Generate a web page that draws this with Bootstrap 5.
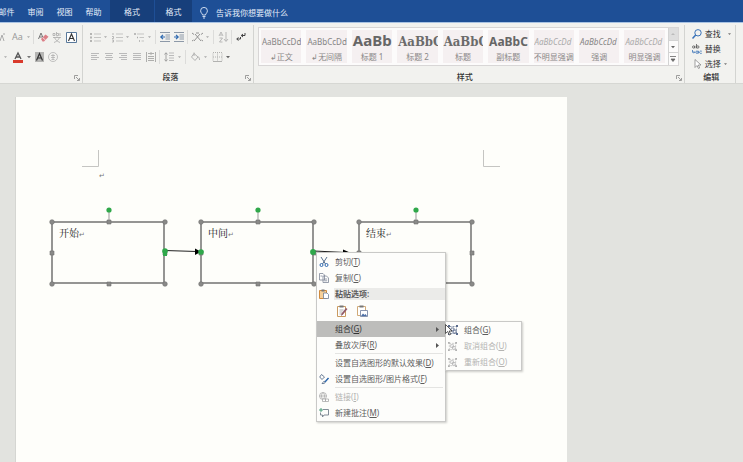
<!DOCTYPE html>
<html lang="zh-CN">
<head>
<meta charset="utf-8">
<meta name="viewport" content="width=device-width, initial-scale=1">
<title>流程图 - Word</title>
<link href="https://cdn.jsdelivr.net/npm/bootstrap@5.3.0/dist/css/bootstrap.min.css" rel="stylesheet">
<style>
:root{--ui:"Noto Sans","Noto Sans CJK SC",sans-serif}
body{font-family:var(--ui);font-size:8px;line-height:12px;background:#e2e3df;color:#444}
button{font:inherit;color:inherit;background:none;border:0;padding:0}
svg{display:block;flex:none;overflow:visible}
.tabs{background:#1e4f96;height:23px;border-bottom:1px solid #a9c3e3;color:#e6eefa}
.tabs .nav{margin-left:-8px;flex-wrap:nowrap}
.tabs a{color:#e6eefa;width:29px;padding:6px 0 4px;text-align:center;text-decoration:none;white-space:nowrap}
.tabs a.ctx{background:#173f7b;width:44px;margin-left:2px}
.tabs a.ctx + a.ctx{width:37px;margin-left:1px}
.ribbon{background:#f2f2ef;height:61px;border-bottom:1px solid #d6d7d3}
.grp{position:relative;border-right:1px solid #d3d4d1;margin:2px 0 0;padding-top:2px}
.grp-font{width:83px}
.grp-para{width:171px;padding-left:5px}
.grp-edit{width:51px;padding-left:7px}
.grp-name{margin-top:auto;color:#333;text-align:center;font-weight:500}
.launch{position:absolute;right:2px;bottom:2px}
.tools{height:20px}
.tool{width:14px;height:16px;display:flex;align-items:center;justify-content:center}
.tool.split{width:22px;justify-content:flex-start;padding-left:2px;gap:3px}
.tool.cut{width:10px;justify-content:flex-start;padding-left:4px}
.rule{width:1px;height:14px;background:#dcdcda;margin:0 2px 0 1px}
.gallery{border:1px solid #d8d6d6;background:#fcfbfb;margin:0 5px 0 4px;height:39px}
.styles{gap:5px;padding:2px 3px 2px 2px}
.sty{flex:1 1 0;min-width:0;background:#f5f0f1;overflow:hidden;color:#898787;height:33px}
.sty .pv{height:20px;line-height:22px;font-family:"Noto Sans","Open Sans",sans-serif;font-size:8px;white-space:nowrap;overflow:hidden;text-align:left;padding-left:1px;color:#858585}
.sty .pv.h1s{font-size:15px;font-weight:700;color:#666;line-height:18px}
.sty .pv.ser{font-family:"DejaVu Serif Condensed","DejaVu Serif",serif;font-size:13px;font-weight:700;color:#6b6b6b}
.sty .pv.sub{font-size:12px;font-weight:700;color:#666}
.sty .pv.em{font-style:italic}
.sty .pv.pale{color:#aaa}
.scroller{width:10px;border-left:1px solid #d3d3d3}
.scroller button{flex:1;display:flex;align-items:center;justify-content:center;border-bottom:1px solid #d3d3d3}
.scroller button:first-child{background:#dedede}
.scroller button:last-child{border-bottom:0}
.cmd{display:flex;align-items:center;gap:3px;height:15px;white-space:nowrap;color:#333}
.cmd svg:first-child{width:10px}
.desk{padding:13px 176px 0 15px}
.sheet{background:#fefefa;border-left:1px solid #d5d6d2;position:relative;min-width:520px}
.art{position:absolute;left:0;top:0}
.node{position:absolute;width:114px;height:63px;padding:4px 6px;font-family:"Liberation Serif","Noto Serif CJK SC","Noto Sans CJK SC",serif;font-size:10px;line-height:14px;color:#222;border:2px solid #959593}
.n1{left:35px;top:124px}.n2{left:184px;top:124px}.n3{left:342px;top:124px}
.node span,.pm{color:#777;font-size:7px}
.pm{position:absolute;left:83px;top:73px}
.ctxmenu{position:absolute;background:#fdfdfb;border:1px solid #c9c9c7;box-shadow:1px 1px 2px #0003;color:#5c5c5c;white-space:nowrap}
.main-menu{left:300px;top:155px;width:130px;padding-top:1px}
.sub-menu{left:429px;top:224px;width:77px}
.mi{display:flex;align-items:center;width:100%;height:16px;text-align:left}
.mi .ic{width:18px;padding-left:2px;flex:none}
.mi .arrow{margin-left:auto;margin-right:6px}
.mi.hot{background:#bdbdbb;color:#333}
.mi:disabled{color:#b4b4b2}
.cap{display:flex;height:15px;align-items:center;font-weight:600}
.cap .ic{width:17px;padding-left:2px;flex:none}
.cap .tx{background:#ebebe9;flex:1;padding-left:1px}
.pastes{height:20px;padding-left:20px;gap:9px}
.line{height:1px;margin:0 2px 1px 18px;background:#e4e4e2}
.pointer{position:absolute;left:429px;top:227px}
</style>
<script src="https://cdn.jsdelivr.net/npm/bootstrap@5.3.0/dist/js/bootstrap.bundle.min.js"></script>
</head>
<body class="d-flex flex-column min-vh-100 overflow-hidden">
<svg width="0" height="0" class="position-absolute" aria-hidden="true">
<defs>
<symbol id="dn" viewBox="0 0 4 4"><path d="M0 1h4L2 3.300z" fill="currentColor"/></symbol>
<symbol id="lc" viewBox="0 0 6 6"><path d="M.5 4V.5H4M2 2l3 3M5.500 3v2.500H3" fill="none" stroke="#888" stroke-width=".8"/></symbol>
<symbol id="grpi" viewBox="0 0 10 10"><path d="M1.500 1.500h7v7h-7z" fill="none" stroke="currentColor" stroke-width=".7" stroke-dasharray="2 1"/><path d="M0 0h2v2H0zM8 0h2v2H8zM0 8h2v2H0zM8 8h2v2H8z" fill="currentColor"/><path d="M3 3h3v3H3zM5 5h3v3H5z" fill="#fff" stroke="currentColor" stroke-width=".8"/></symbol>
</defs>
</svg>
<header>
<div class="tabs d-flex">
<nav class="nav" aria-label="功能区选项卡"><a href="#">邮件</a><a href="#">审阅</a><a href="#">视图</a><a href="#">帮助</a><a href="#" class="ctx">格式</a><a href="#" class="ctx">格式</a></nav>
<button class="d-flex align-items-center gap-2 ps-2 pt-1" type="button"><svg width="8" height="12" viewBox="0 0 8 12" fill="none" stroke="#dfe9f7" stroke-width=".9"><path d="M2.500 8C2.500 6.500.6 6 .6 3.800a3.400 3.400 0 0 1 6.800 0C7.400 6 5.500 6.500 5.500 8zM2.500 9.500h3M3 11h2"/></svg><span>告诉我你想要做什么</span></button>
</div>
<div class="ribbon d-flex">
<section class="grp grp-font d-flex flex-column flex-shrink-0" aria-label="字体">
<div class="tools d-flex align-items-center">
<button class="tool cut" aria-label="缩小字体"><svg width="2" height="8" viewBox="0 0 2 8"><path d="M-4 8l2-6 2 6M-1 1h2" fill="none" stroke="#aaa"/></svg></button>
<button class="tool split" aria-label="更改大小写"><svg width="12" height="10" viewBox="0 0 12 10"><text x="0" y="8" font-size="9" fill="#999">Aa</text></svg><svg width="3" height="4" color="#aaa"><use href="#dn"/></svg></button>
<i class="rule"></i>
<button class="tool" aria-label="清除格式"><svg width="11" height="11" viewBox="0 0 11 11"><path d="M.5 7l2.500-6 2.500 6M1.500 5h3" fill="none" stroke="#777"/><path d="M3 7l4.500-4.500 3 2.200L6 9.500H4.500z" fill="#db7f87"/><path d="M4.500 5.500l3 2.500" stroke="#fff" stroke-width=".7"/></svg></button>
<button class="tool" aria-label="拼音指南"><svg width="10" height="11" viewBox="0 0 10 11" fill="none" stroke="#aaa" stroke-width=".8"><path d="M1 1.500h2v2H1zM4.500 0v3.500h2v-2h-2M8 1v3M1 5.500h8M5 4.500v1M2.500 5.500c1 2.500 3 4 5.500 5M7.500 5.500c-1 2.500-3 4-5.500 5"/></svg></button>
<button class="tool" aria-label="字符边框"><svg width="11" height="11" viewBox="0 0 11 11"><path d="M.5.5h10v10H.5z" fill="#fff" stroke="#59799b"/><path d="M2.500 9l3-7 3 7M3.500 6.500h4" stroke="#333" fill="none" stroke-width="1.100"/></svg></button>
</div>
<div class="tools d-flex align-items-center">
<button class="tool cut" aria-label="突出显示颜色"><svg width="3" height="4" color="#aaa"><use href="#dn"/></svg></button>
<button class="tool split" aria-label="字体颜色"><svg width="12" height="11" viewBox="0 0 12 11"><path d="M3 7l3-6 3 6M4 5h4" stroke="#555" fill="none" stroke-width="1.300"/><path d="M1 8h10v3H1z" fill="#d93a2c"/></svg><svg width="4" height="4" color="#777"><use href="#dn"/></svg></button>
<button class="tool" aria-label="字符底纹"><svg width="9" height="10" viewBox="0 0 9 10"><path d="M0 0h9v10H0z" fill="#b5b5b3"/><path d="M1.500 8.500l3-7 3 7M2.500 6h4" stroke="#333" fill="none" stroke-width="1.200"/></svg></button>
<button class="tool" aria-label="带圈字符"><svg width="10" height="10" viewBox="0 0 10 10" fill="none" stroke="#aaa" stroke-width=".7"><circle cx="5" cy="5" r="4.500"/><path d="M3 3.500h4M5 2v5.500M3 5.500h4M3.500 7.500h3"/></svg></button>
</div>
<svg class="launch" width="6" height="6"><use href="#lc"/></svg>
</section>
<section class="grp grp-para d-flex flex-column flex-shrink-0" aria-label="段落">
<div class="tools d-flex align-items-center">
<button class="tool split" aria-label="项目符号"><svg width="11" height="9" viewBox="0 0 11 9"><path d="M0 0h2v2H0zM0 3.500h2v2H0zM0 7h2v2H0z" fill="#b5b5b3"/><path d="M4 1h7M4 4.500h7M4 8h7" stroke="#c5c5c3"/></svg><svg width="3" height="4" color="#aaa"><use href="#dn"/></svg></button>
<button class="tool split" aria-label="编号"><svg width="11" height="9" viewBox="0 0 11 9"><path d="M1 0v2M0 3.500h1.500v2H0M0 7h1.500v2H0" stroke="#aaa" fill="none" stroke-width=".8"/><path d="M4 1h7M4 4.500h7M4 8h7" stroke="#c5c5c3"/></svg><svg width="3" height="4" color="#aaa"><use href="#dn"/></svg></button>
<button class="tool split" aria-label="多级列表"><svg width="11" height="9" viewBox="0 0 11 9"><path d="M0 1h2M3 4.500h1M5 8h1" stroke="#aaa" stroke-width="1.500"/><path d="M3 1h7M5.500 4.500H10M7.500 8H10" stroke="#c5c5c3"/></svg><svg width="3" height="4" color="#aaa"><use href="#dn"/></svg></button>
<i class="rule"></i>
<button class="tool" aria-label="减少缩进"><svg width="10" height="10" viewBox="0 0 10 10"><path d="M0 .5h10M5.500 3H10M5.500 5H10M5.500 7H10M0 9.500h10" stroke="#8d99a8"/><path d="M5 5H1M3 2.800L.8 5 3 7.200" stroke="#2e69b0" fill="none" stroke-width="1.200"/></svg></button>
<button class="tool" aria-label="增加缩进"><svg width="10" height="10" viewBox="0 0 10 10"><path d="M0 .5h10M5.500 3H10M5.500 5H10M5.500 7H10M0 9.500h10" stroke="#8d99a8"/><path d="M0 5h4M2 2.800L4.200 5 2 7.200" stroke="#2e69b0" fill="none" stroke-width="1.200"/></svg></button>
<i class="rule"></i>
<button class="tool split" aria-label="中文版式"><svg width="11" height="10" viewBox="0 0 11 10" fill="none" stroke="#888" stroke-width=".9"><path d="M0 1l2 1.500M11 1L9 2.500M2 9l6-7M3 2l6 7M0 9l1.500-1M11 9L9.500 8M4 1h3"/></svg><svg width="3" height="4" color="#aaa"><use href="#dn"/></svg></button>
<i class="rule"></i>
<button class="tool" aria-label="排序"><svg width="9" height="10" viewBox="0 0 9 10" fill="none" stroke="#aaa" stroke-width=".8"><path d="M0 4l2-4 2 4M1 3h2M.5 6h3l-3 4h3M7 0v9M5 7l2 2.500L9 7"/></svg></button>
<i class="rule"></i>
<button class="tool" aria-label="显示编辑标记"><svg width="10" height="8" viewBox="0 0 10 8" fill="none" stroke="#444"><path d="M9 0v2.500H5.500M7 1L5.200 2.500 7 4M4.500 4v2H1M2.500 4.500L.7 6l1.800 1.500"/></svg></button>
</div>
<div class="tools d-flex align-items-center">
<button class="tool" aria-label="左对齐"><svg width="8" height="8" viewBox="0 0 8 8"><path d="M0 .5h8M0 2.500h6M0 4.500h8M0 6.500h6" stroke="#bababa"/></svg></button>
<button class="tool" aria-label="居中"><svg width="8" height="8" viewBox="0 0 8 8"><path d="M0 .5h8M1 2.500h6M0 4.500h8M1 6.500h6" stroke="#bababa"/></svg></button>
<button class="tool" aria-label="右对齐"><svg width="8" height="8" viewBox="0 0 8 8"><path d="M0 .5h8M2 2.500h6M0 4.500h8M2 6.500h6" stroke="#bababa"/></svg></button>
<button class="tool" aria-label="两端对齐"><svg width="8" height="8" viewBox="0 0 8 8"><path d="M0 .5h8M0 2.500h8M0 4.500h8M0 6.500h8" stroke="#bababa"/></svg></button>
<button class="tool" aria-label="分散对齐"><svg width="10" height="10" viewBox="0 0 10 10"><path d="M.5 0v10M9.500 0v10M2 1.500h6M5 0v3M2 4.500h6M2 6.500h6M2 8.500h6" stroke="#aeaeac"/></svg></button>
<i class="rule"></i>
<button class="tool split" aria-label="行距"><svg width="11" height="10" viewBox="0 0 11 10"><path d="M2 1v8M.5 2.500L2 .7l1.500 1.800M.5 7.500L2 9.300l1.500-1.800" stroke="#999" fill="none" stroke-width=".9"/><path d="M5 1h5M5 3.500h5M5 6h5M5 8.500h5" stroke="#bababa"/></svg><svg width="3" height="4" color="#aaa"><use href="#dn"/></svg></button>
<i class="rule"></i>
<button class="tool split" aria-label="底纹"><svg width="11" height="10" viewBox="0 0 11 10" fill="none" stroke="#aaa" stroke-width=".9"><path d="M4 1.500l4 3.500-3 3.500L1.500 5zM4 4V.5M8 4.500c1 .5 1.500 2 1.500 3.500"/></svg><svg width="3" height="4" color="#aaa"><use href="#dn"/></svg></button>
<button class="tool split" aria-label="边框"><svg width="11" height="10" viewBox="0 0 11 10" fill="none" stroke="#b2b2b0"><path d="M1 .5h9v9H1zM5.500.5v9M1 5h9" stroke-dasharray="1 1"/><path d="M1 9.500h9"/></svg><svg width="4" height="4" color="#666"><use href="#dn"/></svg></button>
</div>
<div class="grp-name">段落</div><svg class="launch" width="6" height="6"><use href="#lc"/></svg>
</section>
<section class="grp d-flex flex-column flex-fill" aria-label="样式">
<div class="gallery d-flex">
<div class="styles d-flex flex-fill">
<button class="sty"><div class="pv">AaBbCcDd</div><div>↲正文</div></button>
<button class="sty"><div class="pv">AaBbCcDd</div><div>↲无间隔</div></button>
<button class="sty"><div class="pv h1s">AaBb</div><div>标题 1</div></button>
<button class="sty"><div class="pv ser">AaBbC</div><div>标题 2</div></button>
<button class="sty"><div class="pv ser">AaBbC</div><div>标题</div></button>
<button class="sty"><div class="pv sub">AaBbC</div><div>副标题</div></button>
<button class="sty"><div class="pv em pale">AaBbCcDd</div><div>不明显强调</div></button>
<button class="sty"><div class="pv em">AaBbCcDd</div><div>强调</div></button>
<button class="sty"><div class="pv em pale">AaBbCcDd</div><div>明显强调</div></button>
</div>
<div class="scroller d-flex flex-column">
<button aria-label="上一行"><svg width="4" height="4" viewBox="0 0 4 4"><path d="M0 3h4L2 1z" fill="#bbb"/></svg></button>
<button aria-label="下一行"><svg width="4" height="4" color="#666"><use href="#dn"/></svg></button>
<button aria-label="其他"><svg width="6" height="6" viewBox="0 0 6 6"><path d="M0 .5h6M1 3h4L3 5.500z" stroke="#666" stroke-width=".8" fill="#666"/></svg></button>
</div>
</div>
<div class="grp-name pe-2">样式</div><svg class="launch" width="6" height="6"><use href="#lc"/></svg>
</section>
<section class="grp grp-edit d-flex flex-column flex-shrink-0 me-2" aria-label="编辑">
<button class="cmd"><svg width="10" height="10" viewBox="0 0 10 10" fill="none" stroke="#3a72b8"><circle cx="6" cy="3.800" r="3.200"/><path d="M3.700 6L.5 9.500" stroke-width="1.500"/></svg>查找<svg class="ms-1" width="3" height="4" color="#777"><use href="#dn"/></svg></button>
<button class="cmd"><svg width="10" height="10" viewBox="0 0 10 10" fill="none" stroke-width=".8"><g stroke="#555"><circle cx="1.600" cy="3" r="1.100"/><path d="M2.900 1.800v2.500M4.500 0v4.300"/><circle cx="5.800" cy="3" r="1.200"/></g><g stroke="#3a72b8"><circle cx="5" cy="8.200" r="1.200"/><path d="M6.400 6.800v2.700M9.800 7.300c-1-.8-2.200 0-2.200 1s1.200 1.700 2.200.9M.5 6v2.300h2.200M1.800 7.300l1 1-1 1"/></g></svg>替换</button>
<button class="cmd"><svg width="10" height="10" viewBox="0 0 10 10" fill="#fff" stroke="#888" stroke-width=".8"><path d="M3 .5v8l2-2 1.500 3 1.200-.6L6.300 6H9z"/></svg>选择<svg width="3" height="4" color="#777"><use href="#dn"/></svg></button>
<div class="grp-name me-1">编辑</div>
</section>
</div>
</header>
<main class="desk d-flex flex-fill">
<div class="sheet flex-fill">
<div class="pm">↵</div>
<div class="node n1">开始<span>↵</span></div>
<div class="node n2">中间<span>↵</span></div>
<div class="node n3">结束<span>↵</span></div>
<svg class="art" width="500" height="200" viewBox="16 97 500 200" aria-hidden="true">
<defs>
<g id="hnd"><path d="M57 0v-12" stroke="#999"/><g fill="#8a8a88" stroke="#6f6f6f" stroke-width=".6"><circle r="2.300"/><circle cx="113" r="2.300"/><circle cy="62" r="2.300"/><circle cx="113" cy="62" r="2.300"/><path d="M55-2h4v4h-4zM55 60h4v4h-4zM-2 29h4v4h-4zM111 29h4v4h-4z"/></g><circle cx="57" cy="-12" r="2.600" fill="#2fa84a"/></g>
</defs>
<path d="M82 166.500h16.500V150M500 166.500h-16.500V150" fill="none" stroke="#c5c5c2"/>
<use href="#hnd" x="52" y="222"/><use href="#hnd" x="201" y="222"/><use href="#hnd" x="359" y="222"/>
<path d="M165 250.500l32 1M314 251l32 1.500" stroke="#222" stroke-width="1.200"/><path d="M195 248.500l6 3.300-6 3.200zM343 249.500l8 3.500-8 2z" fill="#000"/>
<g fill="#2fa84a"><circle cx="165" cy="251" r="2.800"/><path d="M163 251h4v5h-4z"/><circle cx="201" cy="252" r="2.800"/><circle cx="313" cy="252" r="2.900"/></g>
</svg>
<div class="ctxmenu main-menu" role="menu">
<button class="mi" role="menuitem"><span class="ic"><svg width="10" height="10" viewBox="0 0 10 10" fill="none"><path d="M2 0l4.500 7M8 0L3.500 7" stroke="#56708f"/><circle cx="2.500" cy="8" r="1.500" stroke="#2e69b0"/><circle cx="7.500" cy="8" r="1.500" stroke="#2e69b0"/></svg></span>剪切(<u>T</u>)</button>
<button class="mi" role="menuitem"><span class="ic"><svg width="10" height="10" viewBox="0 0 10 10" fill="#fff" stroke="#7d8797" stroke-width=".8"><path d="M.5.5H4l1.500 1.500v5h-5zM4 3h3.500L9.500 5v4.500H4zM5.200 6h3M5.200 7.800h3M1.500 3h2"/></svg></span>复制(<u>C</u>)</button>
<div class="cap"><span class="ic"><svg width="10" height="10" viewBox="0 0 10 10"><path d="M.5 1.500h7v8h-7z" fill="#f6cf98" stroke="#d08a3c"/><path d="M2.500.5h3v2h-3z" fill="#777"/><path d="M4.500 4H8l1.500 1.500v4h-5z" fill="#fff" stroke="#6f7f95" stroke-width=".8"/></svg></span><span class="tx">粘贴选项:</span></div>
<div class="pastes d-flex align-items-center">
<button aria-label="保留源格式"><svg width="11" height="12" viewBox="0 0 11 12"><path d="M.5 1.500h8v10h-8z" fill="#fff" stroke="#c99a60"/><path d="M2.500.5h4v2h-4z" fill="#777"/><path d="M2.500 5h4M2.500 7h3M2.500 9h2" stroke="#999" stroke-width=".8"/><path d="M10.500 4L6 9.500l-2 1.500.5-2.500L9 3z" fill="#915a68"/></svg></button>
<button aria-label="图片"><svg width="11" height="12" viewBox="0 0 11 12"><path d="M.5 1.500h8v9h-8z" fill="#fff" stroke="#d0aa78"/><path d="M2.500.5h4v2h-4z" fill="#777"/><path d="M3.500 5.500h7v6h-7z" fill="#fff" stroke="#6c7b9b" stroke-width=".8"/><path d="M4 11l2-2.500 1.500 1.500 1-1L10 11z" fill="#4c6fa5"/></svg></button>
</div>
<button class="mi hot" role="menuitem" aria-expanded="true"><span class="ic"></span>组合(<u>G</u>)<svg class="arrow" width="3" height="5" viewBox="0 0 3 5"><path d="M0 0v5l3-2.500z" fill="#555"/></svg></button>
<button class="mi" role="menuitem"><span class="ic"></span>叠放次序(<u>R</u>)<svg class="arrow" width="3" height="5" viewBox="0 0 3 5"><path d="M0 0v5l3-2.500z" fill="#555"/></svg></button>
<div class="line"></div>
<button class="mi" role="menuitem"><span class="ic"></span>设置自选图形的默认效果(<u>D</u>)</button>
<button class="mi" role="menuitem"><span class="ic"><svg width="10" height="10" viewBox="0 0 10 10" fill="none" stroke="#566b88" stroke-width=".9"><path d="M2.500.5l3 2.500-2.500 2.500L.7 3zM9.500 4L6 8M6.200 7.500C5 7 4 8 3 9.500c1.500.3 3.300 0 3.200-2z"/><path d="M6 8l3.500-4" stroke="#2e69b0" stroke-width="1.400"/></svg></span>设置自选图形/图片格式(<u>F</u>)</button>
<div class="line"></div>
<button class="mi" role="menuitem" disabled><span class="ic"><svg width="10" height="10" viewBox="0 0 10 10" fill="none" stroke="#aaa" stroke-width=".8"><circle cx="4" cy="4" r="3.500"/><path d="M.5 4h7M4 .5c-2 2-2 5 0 7M4 .5c2 2 2 5 0 7"/><path d="M3.500 7h3v2.500h-3zM6.500 7h3v2.500h-3z" fill="#fff"/></svg></span>链接(<u>I</u>)</button>
<button class="mi" role="menuitem"><span class="ic"><svg width="10" height="10" viewBox="0 0 10 10" fill="none" stroke="#75808c" stroke-width=".9"><path d="M4 1.500h5.500V7H5L3.500 9V7h-2V4.500"/><path d="M2 0v4M0 2h4" stroke="#3d9470"/></svg></span>新建批注(<u>M</u>)</button>
</div>
<div class="ctxmenu sub-menu" role="menu">
<button class="mi" role="menuitem"><span class="ic"><svg width="10" height="10" color="#5a6b8c"><use href="#grpi"/></svg></span>组合(<u>G</u>)</button>
<button class="mi" role="menuitem" disabled><span class="ic"><svg width="9" height="9" color="#b0b0b0"><use href="#grpi"/></svg></span>取消组合(<u>U</u>)</button>
<button class="mi" role="menuitem" disabled><span class="ic"><svg width="9" height="9" color="#b0b0b0"><use href="#grpi"/></svg></span>重新组合(<u>O</u>)</button>
</div>
<svg class="pointer" width="8" height="12" viewBox="0 0 8 12"><path d="M.5.5v9l2.200-2 1.600 3.500 1.400-.6L4.200 7H7z" fill="#fff" stroke="#333" stroke-width=".8"/></svg>
</div>
</main>
</body>
</html>
